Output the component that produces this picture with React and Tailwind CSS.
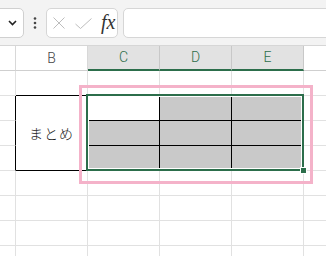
import React from "react";

const GRID = "border-r border-b border-r-[#e1e1e1] border-b-[#e1e1e1]";

function Toolbar() {
  return (
    <div className="h-[46px] bg-[#f3f3f3] border-b border-b-[#d6d6d6] flex items-start pt-[8px]">
      <div className="-ml-[12px] w-[36px] h-[30px] bg-white border border-[#d0d0d0] rounded-[5px] flex items-center justify-end pr-[6px] shrink-0">
        <svg width="9" height="6" viewBox="0 0 9 6">
          <path d="M1 1 L4.5 4.5 L8 1" fill="none" stroke="#222" strokeWidth="1.6" />
        </svg>
      </div>
      <div className="w-[22px] h-[30px] flex items-center justify-center shrink-0">
        <svg width="4" height="12" viewBox="0 0 4 12">
          <circle cx="2" cy="1.5" r="1.3" fill="#444" />
          <circle cx="2" cy="6" r="1.3" fill="#444" />
          <circle cx="2" cy="10.5" r="1.3" fill="#444" />
        </svg>
      </div>
      <div className="w-[72px] h-[30px] bg-white border border-[#d6d6d6] rounded-[5px] flex items-center shrink-0">
        <svg className="ml-[6px]" width="12" height="12" viewBox="0 0 12 12">
          <path d="M0.5 0.5 L11.5 11.5 M11.5 0.5 L0.5 11.5" stroke="#bdbdbd" strokeWidth="1" fill="none" />
        </svg>
        <svg className="ml-[10px]" width="17" height="11" viewBox="0 0 17 11">
          <path d="M0.5 6 L5.5 10.5 L16.5 0.5" stroke="#bdbdbd" strokeWidth="1" fill="none" />
        </svg>
        <span className="ml-[9px] -mt-[2px] text-[20px] leading-none italic text-[#333] font-['Liberation_Serif','DejaVu_Serif',serif]">fx</span>
      </div>
      <div className="ml-[5px] h-[30px] flex-1 -mr-[20px] bg-white border border-[#d6d6d6] rounded-[5px]" />
    </div>
  );
}

function HeaderRow() {
  const plain = "border-r border-b border-r-[#d8d8d8] border-b-[#cfcfcf] bg-white";
  const sel = "border-r border-b-2 border-r-[#c8c8c8] border-b-[#2c6e4b] bg-[#e2e2e2] text-[#2c6e4b] font-light flex items-center justify-center";
  return (
    <>
      <div className={plain} />
      <div className={plain + " flex items-center justify-center text-[#444] font-light"}>B</div>
      <div className={sel}>C</div>
      <div className={sel}>D</div>
      <div className={sel}>E</div>
      <div className="border-b border-b-[#cfcfcf] bg-white" />
    </>
  );
}

export default function App() {
  const topEdge = "border-r border-b border-r-[#e1e1e1] border-b-black";
  const leftEdge = "border-r border-b border-r-black border-b-[#e1e1e1]";
  const white = "border-r border-b border-r-black border-b-black bg-white";
  const gray = "border-r border-b border-r-black border-b-black bg-[#c9c9c9]";
  const emptyRows = [5, 6, 7, 8];
  return (
    <div className="w-[326px] h-[256px] overflow-hidden bg-white font-['Roboto','Noto_Sans','Noto_Sans_CJK_JP',sans-serif] text-[14px]">
      <Toolbar />
      <div className="relative">
        <div className="grid grid-cols-[16px_72px_72px_72px_72px_72px] auto-rows-[25px]">
          <HeaderRow />
          {/* row 1 */}
          <div className={GRID} />
          <div className={topEdge} />
          <div className={topEdge} />
          <div className={topEdge} />
          <div className={topEdge} />
          <div className={GRID} />
          {/* row 2 */}
          <div className={leftEdge} />
          <div className="row-span-3 border-r border-b border-r-black border-b-black flex items-center justify-center text-[#222] tracking-[1px] font-['Noto_Sans_CJK_JP',sans-serif] font-light">
            まとめ
          </div>
          <div className={white} />
          <div className={gray} />
          <div className={gray} />
          <div className={GRID} />
          {/* row 3 */}
          <div className={leftEdge} />
          <div className={gray} />
          <div className={gray} />
          <div className={gray} />
          <div className={GRID} />
          {/* row 4 */}
          <div className={leftEdge} />
          <div className={gray} />
          <div className={gray} />
          <div className={gray} />
          <div className={GRID} />
          {emptyRows.map((r) => (
            <React.Fragment key={r}>
              <div className={GRID} />
              <div className={GRID} />
              <div className={GRID} />
              <div className={GRID} />
              <div className={GRID} />
              <div className={GRID} />
            </React.Fragment>
          ))}
        </div>
        {/* selection */}
        <div className="absolute left-[86px] top-[48px] w-[218px] h-[77px] border-2 border-[#2c6e4b] shadow-[inset_0_0_0_1px_white]" />
        <div className="absolute left-[300px] top-[121px] w-[7px] h-[7px] bg-[#2c6e4b] border border-white" />
        {/* pink highlight */}
        <div className="absolute left-[79px] top-[39px] w-[234px] h-[99px] border-[3px] border-[#f4b2c9]" />
      </div>
    </div>
  );
}
